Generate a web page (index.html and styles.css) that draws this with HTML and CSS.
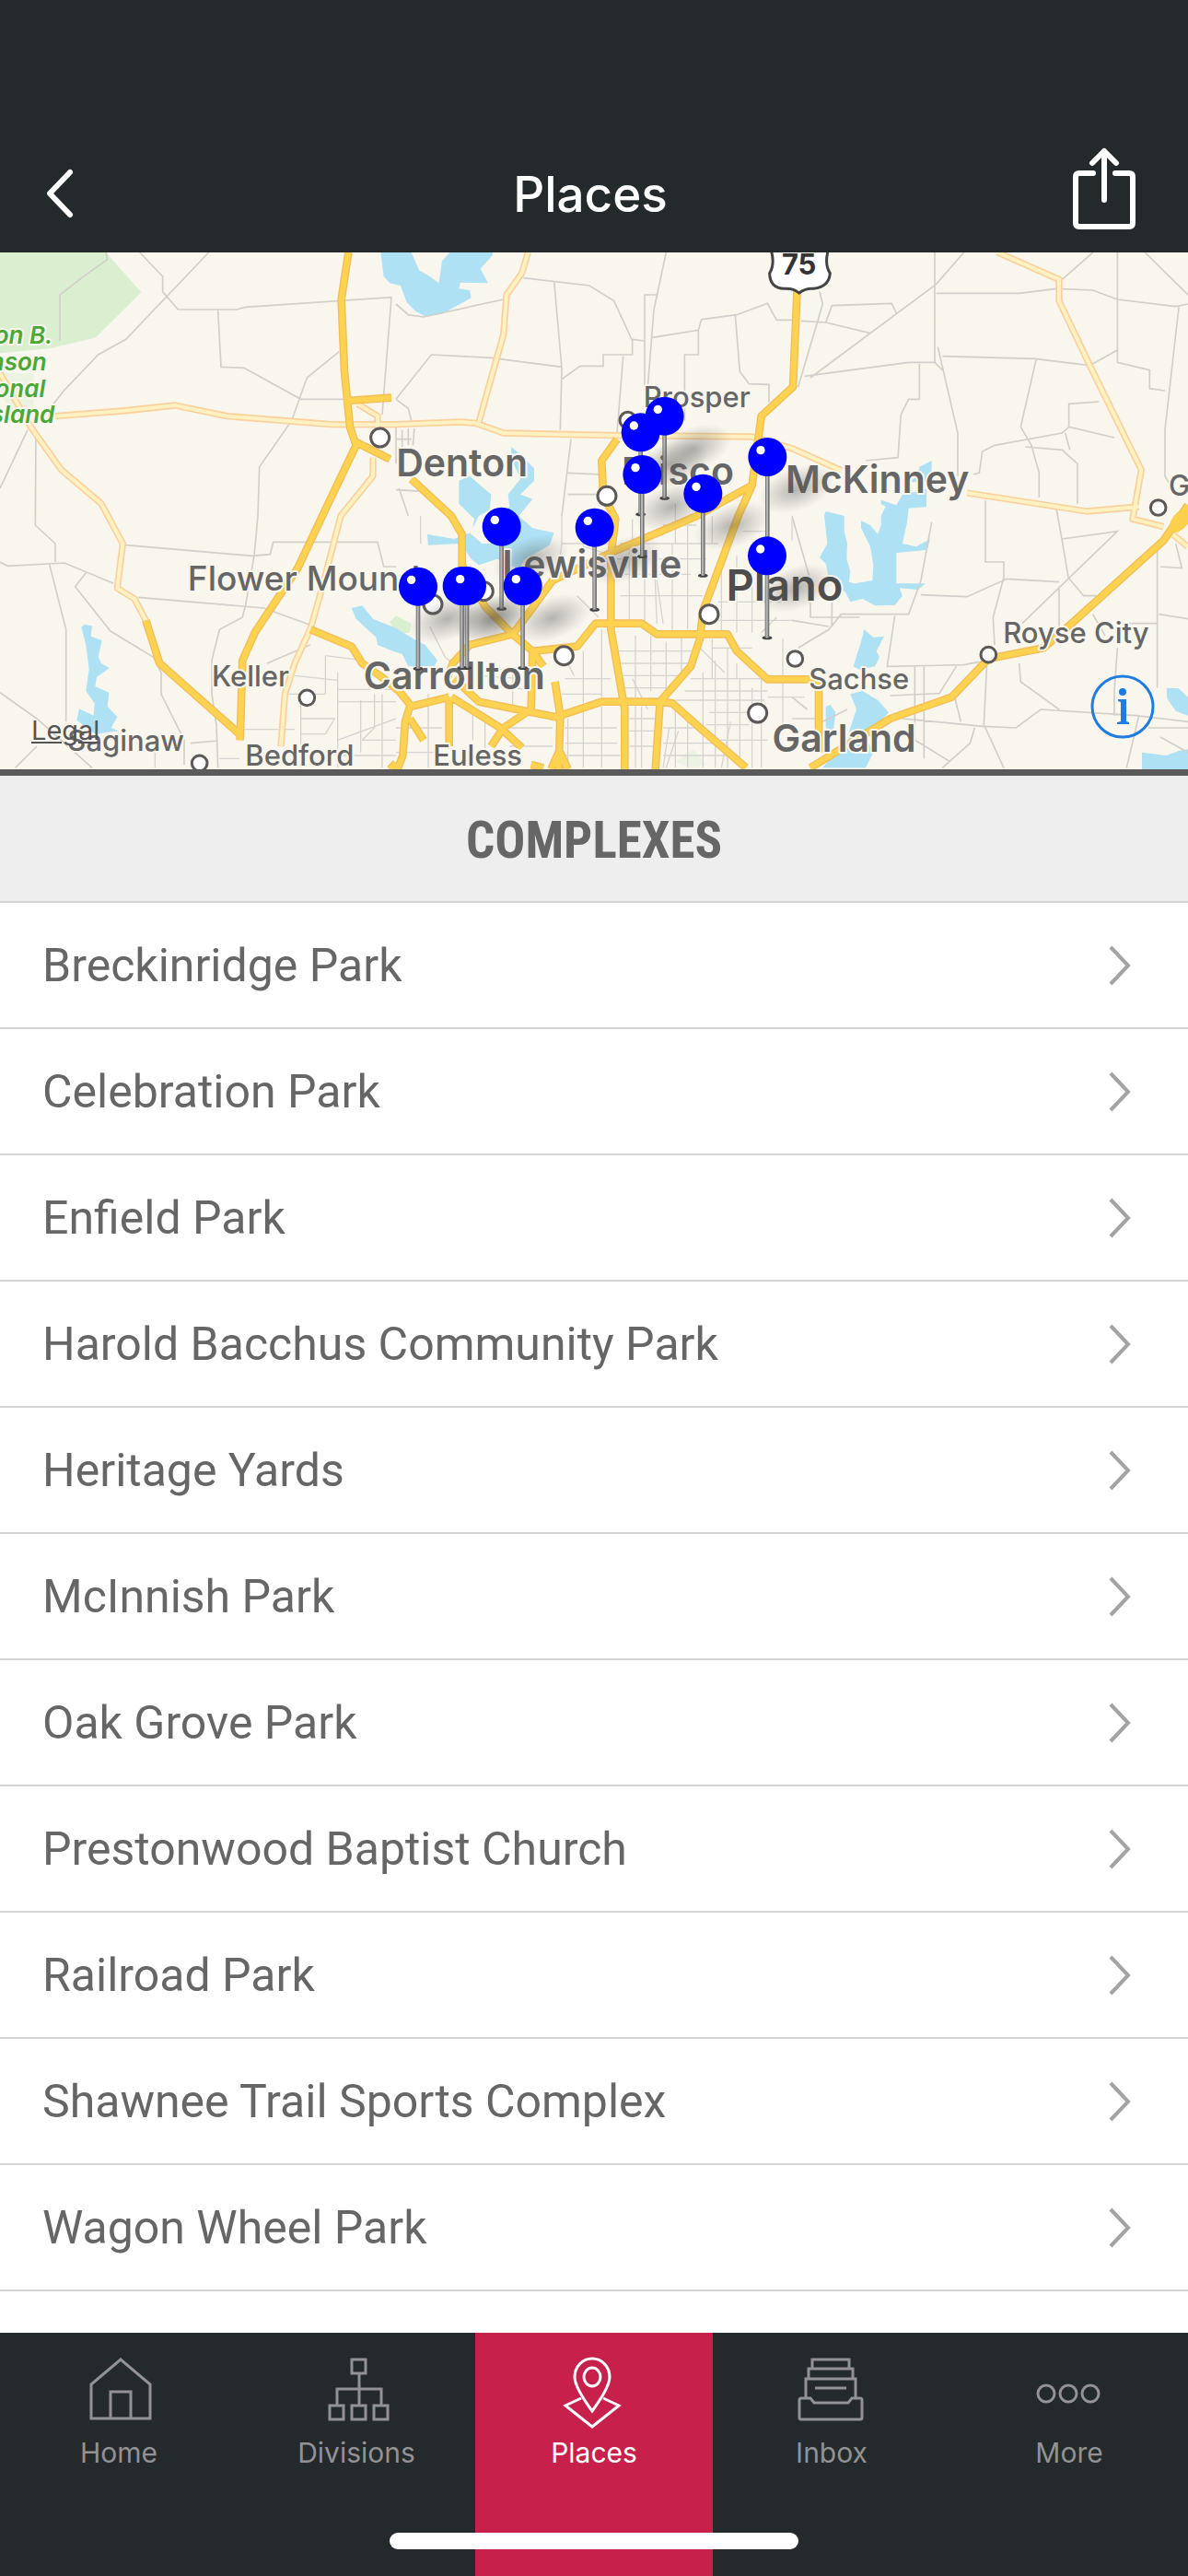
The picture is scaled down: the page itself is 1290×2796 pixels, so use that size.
FILE: index.html
```
<!DOCTYPE html>
<html lang="en">
  <head>
    <meta charset="UTF-8" />
    <meta name="viewport" content="width=device-width, initial-scale=1.0" />
    <title>Places</title>
    <link rel="stylesheet" href="styles.css">
  </head>
  <body>
    <header class="header">
      <button class="header-btn" aria-label="Back">
        <svg class="icon-back" viewBox="0 0 32 56"><path d="M27 4L5 27L27 50" /></svg>
      </button>
      <h1>Places</h1>
      <button class="header-btn header-btn-right" aria-label="Share">
        <svg class="icon-share" viewBox="0 0 68 102">
          <path d="M22 28H7Q3 28 3 32V82Q3 86 7 86H61Q65 86 65 82V32Q65 28 61 28H46" />
          <path d="M34 57V4M21 17L34 4L47 17" />
        </svg>
      </button>
    </header>

    <main>
      <!-- Map -->
      <div class="map">
        <svg class="map-canvas" viewBox="0 12 3870 1683" role="img" aria-label="Map of the complexes">
          <defs>
            <radialGradient id="shade">
              <stop offset="0" stop-color="#444" stop-opacity="0.38" />
              <stop offset="0.5" stop-color="#555" stop-opacity="0.2" />
              <stop offset="1" stop-color="#666" stop-opacity="0" />
            </radialGradient>
            <g id="pin">
              <ellipse cx="95" cy="105" rx="130" ry="70" transform="rotate(-20 95 105)" fill="url(#shade)" />
              <ellipse cx="0" cy="267" rx="16" ry="6" fill="#444" />
              <path d="M0 50V267" stroke="#777" stroke-width="14" />
              <path d="M-1 50V267" stroke="#b5b5b5" stroke-width="6" />
              <circle r="63" fill="#00f" />
              <circle cx="-22" cy="-22" r="14" fill="#fff" />
            </g>
            <g id="highways">
              <path d="M0 405L100 580L200 720L330 830L400 960L382 1105L438 1140L475 1210" />
              <path d="M180 545L400 528L570 510L740 545L1080 572L1290 572L1500 564L1550 568L1640 600L2010 608L2450 612L2580 650L2740 722M3150 795L3540 855L3710 840" />
              <path d="M1165 505L1230 545V600M1215 680V740L1110 870L1045 1120L1012 1235L960 1350L928 1450L915 1620" />
              <path d="M1720 12L1700 80L1650 150L1640 280L1560 565" />
              <path d="M3250 12L3450 100V170L3560 400L3718 720L3690 880L3790 905M3820 930L3870 970" />
            </g>
            <path id="freeways" d="M1135 12L1112 165L1122 400L1140 580L1160 640L1050 870L970 1040L830 1250L790 1340L782 1600M1130 495L1275 485M1160 630L1270 685M1340 750L1470 870L1505 930V1030L1580 1165L1670 1255L1740 1315M475 1210L520 1350L780 1580M1012 1240L1145 1295L1180 1350L1240 1392L1300 1440L1340 1490L1463 1460M1455 1400L1475 1350L1530 1290L1670 1255L1720 1190L1800 1080L1990 990L2270 870L2450 770M2597 130L2583 450L2480 545L2450 770L2405 870L2290 1180L2280 1270L2250 1360L2150 1475L2135 1695M2010 620L1960 690L1965 800L2005 880L1990 1000L1990 1240L2035 1500V1695M1740 1310L1880 1295L1940 1220H2090L2140 1255H2370L2400 1310L2500 1402H2667V1640M1335 1490L1320 1540L1312 1650L1295 1695M1335 1530L1380 1600M1463 1460V1620M1480 1400L1560 1475L1810 1525L1960 1475H2150L2190 1480L2280 1560L2430 1690M1470 1460L1630 1560L1700 1625M1600 1620L1640 1560L1730 1500L1735 1310L1770 1360M1808 1410L1825 1520L1820 1695M1820 1640L1795 1695M1825 1640L1850 1695M1730 1680L1770 1690M1290 1675L1270 1695M3870 835L3790 950L3480 1230L3400 1300L3220 1335L3100 1460L2900 1530L2640 1690" />
          </defs>

          <!-- parks -->
          <path class="park" d="M0 12H345L460 142L310 290L160 325L0 340Z" />
          <path class="park faint" d="M0 405H110V520L60 545L0 480Z" />
          <path class="park" d="M1270 1215L1290 1195L1340 1220L1335 1250L1290 1255Z" />
          <path class="park faint" d="M2200 1670L2260 1630L2300 1680L2250 1690Z" />

          <!-- lakes -->
          <g class="lake">
            <path d="M1240 12L1250 90L1270 112L1305 120L1325 175L1355 205L1385 220L1440 212L1535 160L1530 135L1495 130L1500 110L1590 112L1565 65L1605 20V12H1465L1440 40L1430 112L1400 90L1365 70L1340 12Z" />
            <path d="M1495 755L1530 740L1600 800L1595 850L1560 870L1540 910L1545 880L1495 830ZM1660 840L1655 800L1695 750L1665 680V645L1690 665L1740 715L1740 755L1695 800L1735 815L1690 870L1735 910L1805 925L1790 965L1710 1010L1690 1045L1620 1010L1560 1030L1535 1010L1500 960L1395 965L1392 930L1480 945L1530 925L1570 960L1600 960L1580 900Z" />
            <path d="M1145 1170L1180 1162L1215 1205L1290 1235L1355 1275L1385 1290L1425 1340L1415 1360L1330 1360L1310 1320L1280 1310L1230 1290L1225 1265L1160 1205Z" />
            <path d="M265 1232L275 1223L300 1228L296 1262L332 1275L320 1330L330 1350L356 1365L315 1395L310 1425L355 1445L350 1490L382 1525L362 1560L387 1570L310 1580L250 1535L258 1498L305 1520L308 1480L280 1440L290 1370L280 1290Z" />
            <path d="M2685 870L2690 855L2750 870L2750 920L2760 960L2758 1010L2770 1050L2765 1085L2785 1090L2842 1080L2845 1030L2835 970L2805 910L2805 885L2835 900L2860 930L2870 900L2870 870L2885 840L2870 830L2870 818L2920 835L2940 800L3010 785L3035 770V690L2995 710L2990 740L2960 760H3018V840L2960 845L2955 890L2940 960L2985 970L3030 945L3020 980L2980 985L2920 990L2920 1090L3015 1090L2990 1110L2930 1105L2940 1130L2915 1160L2850 1162L2810 1140L2770 1150L2755 1120L2700 1070L2690 1025L2670 1005L2695 960Z" />
            <path d="M2815 1240L2845 1265L2880 1262L2855 1310L2865 1330L2850 1360L2800 1370L2780 1360L2795 1310L2805 1280Z" />
            <path d="M2770 1450L2810 1440L2860 1470L2895 1510L2850 1560L2820 1590L2845 1640L2820 1690H2680L2700 1665L2760 1620L2770 1560L2790 1500ZM2690 1490L2705 1485L2722 1510L2715 1570L2690 1560Z" />
            <path d="M3800 1430L3840 1432L3870 1460V1520L3830 1505L3802 1465ZM3720 1640L3800 1650L3840 1635L3870 1630V1695H3720Z" />
          </g>

          <!-- local roads -->
          <g class="local">
            <path d="M345 12L350 35L270 92L195 150V300M455 12L530 90V140L580 198H770L800 190L1275 158L1245 540M680 12L410 295L320 345L210 460L170 510M710 200L720 385L795 388L980 490H1120M1105 335L1000 420L975 490L950 560L845 710L840 870L828 1000L800 1160L790 1200L715 1240L690 1340V1450L705 1550L710 1690" />
            <path d="M90 590L0 780M117 600L115 900L180 960V1020M0 1020L25 1033L210 1023L370 1090M160 1023L215 1240V1540M280 1055L245 1100L360 1245L500 1330L525 1380L525 1450L600 1600M410 965L820 1000L880 995L890 955L1230 955L1250 1035H1290M450 1135L860 1170L1010 1225M0 1445L120 1530L300 1690M120 1620L50 1690M620 1610L710 1602M870 1350L1010 1290M600 1600V1680" />
            <path d="M1290 180L1330 215L1380 222L1640 165M1705 95L1920 120L2000 170L2060 300L2060 345H1965V382H1890L1830 425M1805 105L1830 390L1825 590M1290 490L1405 345L1600 355L1830 385M2170 12L2130 200L2110 450M2140 150H2100V450M2060 295L2100 300M2120 290L2275 265L2285 230L2400 215L2500 178L2530 232H2590M2275 265V345H2230V560M2395 215L2410 400L2440 440L2505 442V500M2030 350L2010 600M1860 620L1830 870M1850 730L1960 735M1850 800H1960M1290 490L1330 520L1340 560" />
            <path d="M1290 580V700M1310 590V650M1330 585V640M1350 585L1345 640M1290 620H1340M1300 780L1330 870M1290 785L1380 790" />
            <path d="M2610 235L2690 240L2835 275M3140 12L3050 115L2640 420M2670 140L2680 180L2600 450M2690 240L2710 185L2905 178L2920 210M3045 12V370L3070 395M3050 145H3320L3440 130L3560 135L3640 165L3830 188L3870 180M2620 415L2960 370H3045M2995 375V490H2960L2935 540L2925 680L2820 690M3055 320L3120 600V740M3070 350L3370 358L3550 380L3640 330L3640 370L3745 395V455L3795 462M3640 12V370M3560 12L3460 100M3730 12L3870 150M3840 190L3795 590V740L3830 800M3375 362L3325 580L3360 640L3385 730V810M3580 498L3482 505V580L3630 615M3482 580L3460 600L3240 640L3200 660L3190 730L3170 735M3340 645L3460 655L3510 700V830M3470 600L3485 655M3210 820V1020H3270V1070L3235 1200L3240 1290" />
            <path d="M3440 840L3460 950L3480 1070L3530 1130H3570M3460 945L3640 920L3330 1220M3450 1100V1230M3035 890L3000 1080L2960 1190L2740 1190L2700 1240L2600 1300M3000 1127L3150 1133L3280 1075L3450 1085M2915 1195L2890 1360L3140 1355L3190 1345M2900 1455L3060 1448L3115 1360M2980 1360V1600L3095 1670M3010 1360V1660M2940 1530L3200 1555L3310 1560L3390 1500L3700 1520L3870 1540M3215 1350L3205 1550L3270 1690M3320 1350L3325 1410L3450 1500M3110 1460L3130 1540M3175 1560L3160 1610L3070 1690M3640 1300L3630 1440V1520M3770 950V1430M3775 1190L3870 1205M3650 1220H3770M3560 1190L3600 1260M3780 1590L3870 1640M3710 1520L3670 1690M3740 1560H3870M2580 870L2640 1080M2640 1130V1200H2800M2580 1210L2700 1230" />
            <path d="M2710 1230V1130M2580 1460L2630 1500M2580 1530H2660M2680 1540L2760 1500M3830 960L3850 1040L3780 1035" />
          </g>

          <!-- city street grid -->
          <g class="grid">
            <path d="M1060 1325L1180 1340M1060 1325V1450M1100 1380V1690M940 1450H1060M960 1390L1100 1405M1100 1435H1290M1100 1475H1290M980 1530L1090 1530L1060 1580H980V1690M1175 1470V1640M1245 1450V1690M1220 1450V1560L1180 1600M1100 1600L1290 1530M1180 1600H1290M1100 1650H1290M790 1565H960M715 1660H780M505 1640V1690M980 1480V1580" />
            <path d="M1395 1450V1690M1400 1230L1450 1330L1520 1390M1370 870V960M1670 1370V1500M1830 870V960L1820 1040M1900 880V970L2000 1000M1830 960H1980M2010 1060H2250M2020 1130H2290M2010 1010H2300M2020 960H2340M2050 980V1220M2100 1010V1220M2130 980L2140 1220M2190 960V1240M2240 900V1240M2070 1260V1690M2120 1260V1440M2170 1280V1440M2220 1260V1400M1960 1240V1460M1900 1310V1480M2000 1310H2260M2020 1350H2250M2030 1390H2220M2030 1430H2170M1840 1400H1990M1830 1450H1960" />
            <path d="M1850 1530V1690M1900 1510V1690M1960 1490V1690M2090 1490V1690M1840 1560H2010M1840 1610H2010M1840 1650H2020M2050 1530H2140M2050 1570H2140M2050 1620H2130M2160 1560H2270M2160 1610H2330M2160 1650H2370M2200 1490V1690M2240 1530V1690M2290 1380V1690M2330 1340V1690M2370 1300V1690M2410 1400V1690M2450 1430V1690M2250 1400H2480M2230 1440H2500M2200 1470H2490M2310 1510H2440M2300 1550H2440M2340 1600H2500M2400 1350V1400M2320 1270V1400M2350 1040V1250M2400 1000V1250M2450 1060V1250M2340 1150H2550M2340 1210H2580M2320 1300H2450M2480 1400V1690M2550 1270V1560M2500 1460H2620M2530 1200L2480 1250M1680 1430L1735 1440M1560 1390L1700 1400M1650 1560H1800M1660 1620H1800M1290 1640H1440M1290 1560H1440M1540 1500V1600M1580 1530V1640M2160 900H2270M2200 830V960M2060 880V960M2320 870V960M2580 880V950M2420 920H2500" />
            <path d="M1840 1330L1870 1390M2280 1300L2360 1380M2140 1080L2160 1220M2060 1400L2110 1500M2180 1560L2160 1690M2380 1540L2350 1690M1880 1130L1950 1200M2210 1570L2170 1690" />
          </g>

          <!-- highways -->
          <use href="#highways" class="highway" />
          <use href="#highways" class="highway highway-fill" />

          <!-- freeways -->
          <use href="#freeways" class="freeway-edge" />
          <use href="#freeways" class="freeway" />
          <ellipse cx="3845" cy="885" rx="26" ry="45" transform="rotate(38 3845 885)" fill="#fbd04c" />

          <!-- route shield -->
          <path d="M2512 5Q2525 50 2507 80Q2508 128 2555 130Q2585 128 2603 144Q2625 128 2650 130Q2700 125 2704 80Q2685 50 2698 5Z" fill="#fff" stroke="#444" stroke-width="9" />
          <text class="label shield" x="2603" y="84">75</text>

          <!-- towns -->
          <g class="town">
            <circle cx="1238" cy="615" r="30" />
            <circle cx="2045" cy="558" r="26" />
            <circle cx="1977" cy="805" r="30" />
            <circle cx="1410" cy="1158" r="30" />
            <circle cx="1576" cy="1115" r="30" />
            <circle cx="1837" cy="1325" r="30" />
            <circle cx="2310" cy="1190" r="30" />
            <circle cx="2590" cy="1335" r="25" />
            <circle cx="2468" cy="1512" r="30" />
            <circle cx="1000" cy="1462" r="25" />
            <circle cx="650" cy="1675" r="25" />
            <circle cx="3220" cy="1322" r="25" />
            <circle cx="3773" cy="843" r="25" />
          </g>

          <!-- labels -->
          <g class="label label-park">
            <text x="172" y="308">Lyndon B.</text>
            <text x="152" y="395">Johnson</text>
            <text x="148" y="482">National</text>
            <text x="178" y="568">Grassland</text>
          </g>
          <g class="label label-small">
            <text x="2270" y="516">Prosper</text>
            <text x="816" y="1424">Keller</text>
            <text x="410" y="1635">Saginaw</text>
            <text x="976" y="1684">Bedford</text>
            <text x="1556" y="1684">Euless</text>
            <text x="3505" y="1284">Royse City</text>
            <text x="2798" y="1434">Sachse</text>
            <text x="3842" y="804">G</text>
          </g>
          <g class="label label-mid">
            <text x="990" y="1113">Flower Mound</text>
          </g>
          <g class="label label-large">
            <text x="1505" y="742">Denton</text>
            <text x="2858" y="794">McKinney</text>
            <text x="2208" y="767">Frisco</text>
            <text x="1928" y="1072">Lewisville</text>
            <text x="1480" y="1435">Carrollton</text>
            <text x="2750" y="1639">Garland</text>
          </g>
          <g class="label label-city">
            <text x="2556" y="1147">Plano</text>
          </g>

          <!-- pins -->
          <use href="#pin" x="2165" y="545" />
          <use href="#pin" x="2087" y="598" />
          <use href="#pin" x="2500" y="678" />
          <use href="#pin" x="2092" y="735" />
          <use href="#pin" x="2290" y="797" />
          <use href="#pin" x="1634" y="905" />
          <use href="#pin" x="1937" y="908" />
          <use href="#pin" x="2499" y="1000" />
          <use href="#pin" x="1362" y="1100" />
          <use href="#pin" x="1521" y="1098" />
          <use href="#pin" x="1505" y="1098" />
          <circle cx="1512" cy="1098" r="63" fill="#00f" />
          <circle cx="1499" cy="1076" r="14" fill="#fff" />
          <use href="#pin" x="1703" y="1098" />
        </svg>
        <a class="map-legal" href="#">Legal</a>
        <button class="map-info" aria-label="Info">
          <svg viewBox="0 0 70 70">
            <circle cx="35" cy="35" r="33" />
            <path class="glyph" d="M35 15A4 4 0 0 1 35 23A4 4 0 0 1 35 15ZM30 27H39V51L42 52V54H29V52L33 51V30L30 29Z" />
          </svg>
        </button>
      </div>

      <h2>Complexes</h2>

      <ul class="places">
        <li><a href="#">Breckinridge Park <svg class="chevron" viewBox="0 0 24 44"><path d="M2 2L21 22L2 42" /></svg></a></li>
        <li><a href="#">Celebration Park <svg class="chevron" viewBox="0 0 24 44"><path d="M2 2L21 22L2 42" /></svg></a></li>
        <li><a href="#">Enfield Park <svg class="chevron" viewBox="0 0 24 44"><path d="M2 2L21 22L2 42" /></svg></a></li>
        <li><a href="#">Harold Bacchus Community Park <svg class="chevron" viewBox="0 0 24 44"><path d="M2 2L21 22L2 42" /></svg></a></li>
        <li><a href="#">Heritage Yards <svg class="chevron" viewBox="0 0 24 44"><path d="M2 2L21 22L2 42" /></svg></a></li>
        <li><a href="#">McInnish Park <svg class="chevron" viewBox="0 0 24 44"><path d="M2 2L21 22L2 42" /></svg></a></li>
        <li><a href="#">Oak Grove Park <svg class="chevron" viewBox="0 0 24 44"><path d="M2 2L21 22L2 42" /></svg></a></li>
        <li><a href="#">Prestonwood Baptist Church <svg class="chevron" viewBox="0 0 24 44"><path d="M2 2L21 22L2 42" /></svg></a></li>
        <li><a href="#">Railroad Park <svg class="chevron" viewBox="0 0 24 44"><path d="M2 2L21 22L2 42" /></svg></a></li>
        <li><a href="#">Shawnee Trail Sports Complex <svg class="chevron" viewBox="0 0 24 44"><path d="M2 2L21 22L2 42" /></svg></a></li>
        <li><a href="#">Wagon Wheel Park <svg class="chevron" viewBox="0 0 24 44"><path d="M2 2L21 22L2 42" /></svg></a></li>
      </ul>
    </main>

    <nav class="tabs">
      <a class="tab" href="#">
        <svg viewBox="0 0 80 80"><path d="M10 67V30L42 3L74 30V67ZM31 67V38H53V67" /></svg>
        Home
      </a>
      <a class="tab" href="#">
        <svg viewBox="0 0 80 80"><path d="M35 3H50V18H35ZM43 18V53M19 53V35H67V53M11 53H26V68H11ZM35 53H50V68H35ZM59 53H74V68H59Z" /></svg>
        Divisions
      </a>
      <a class="tab active" href="#">
        <svg viewBox="0 0 80 80"><path d="M38 59Q19 33 19 22A19 20 0 0 1 57 22Q57 33 38 59ZM38 12A9 10 0 0 1 38 32A9 10 0 0 1 38 12ZM26 45L9 53L38 76L67 53L50 45" /></svg>
        Places
      </a>
      <a class="tab" href="#">
        <svg viewBox="0 0 80 80"><path d="M19 13V3H59V13M15 24V13H63V24M12 45V24H66V45M22 34H56M7 45H17L21 50H58L62 45H71Q73 45 73 47V66Q73 68 71 68H7Q5 68 5 66V47Q5 45 7 45Z" /></svg>
        Inbox
      </a>
      <a class="tab" href="#">
        <svg viewBox="0 0 80 80"><circle cx="15" cy="40" r="9" /><circle cx="39" cy="40" r="9" /><circle cx="63" cy="40" r="9" /></svg>
        More
      </a>
      <div class="home-bar"></div>
    </nav>
  </body>
</html>
```
FILE: styles.css
```
* {
  box-sizing: border-box;
}

body {
  margin: 0;
  min-height: 100vh;
  display: flex;
  flex-direction: column;
  background: #fff;
  color: #666;
  font-family: Roboto, "Liberation Sans", sans-serif;
}

button {
  padding: 0;
  border: none;
  background: none;
  cursor: pointer;
}

svg {
  display: block;
}

/* Header */
.header {
  display: grid;
  grid-template-columns: 1fr auto 1fr;
  align-items: center;
  height: 274px;
  padding: 148px 57px 0 49px;
  background: #24292c;
  color: #fff;
}

.header h1 {
  margin: 0;
  font-family: Inter, sans-serif;
  font-size: 53px;
  font-weight: 500;
  line-height: 64px;
}

.header-btn {
  justify-self: start;
}

.header-btn-right {
  justify-self: end;
}

.header svg {
  fill: none;
  stroke: #fff;
  stroke-width: 6;
  stroke-linecap: round;
  stroke-linejoin: round;
}

.icon-back {
  width: 32px;
  height: 56px;
}

.icon-share {
  width: 68px;
  height: 102px;
}

/* Map */
.map {
  position: relative;
  border-bottom: 7px solid #5a5a5a;
  background: #f9f6ee;
}

.map-canvas {
  width: 100%;
  height: auto;
}

.park {
  fill: #d9efd0;
}

.faint {
  opacity: 0.4;
}

.lake {
  fill: #aee1f4;
}

.local,
.grid {
  fill: none;
  stroke: #d2cfca;
  stroke-width: 5;
}

.grid {
  stroke: #d6d4d0;
  stroke-width: 4;
}

.highway {
  fill: none;
  stroke: #fbd09a;
  stroke-width: 22;
  stroke-linejoin: round;
}

.highway-fill {
  stroke: #fff1c2;
  stroke-width: 12;
}

.freeway-edge,
.freeway {
  fill: none;
  stroke: #f3bd55;
  stroke-width: 26;
  stroke-linejoin: round;
}

.freeway {
  stroke: #fdd250;
  stroke-width: 18;
}

.town {
  fill: #fff;
  stroke: #5c5858;
  stroke-width: 9;
}

.label {
  font-family: Inter, sans-serif;
  text-anchor: middle;
  fill: #666;
  stroke: #f9f6ee;
  stroke-width: 12;
  stroke-linejoin: round;
  paint-order: stroke;
}

.label-park {
  font-size: 78px;
  font-style: italic;
  font-weight: 600;
  text-anchor: end;
  fill: #4ba836;
}

.label-small {
  font-size: 93px;
  font-weight: 500;
}

.label-mid {
  font-size: 111px;
  font-weight: 500;
}

.label-large {
  font-size: 123px;
  font-weight: 600;
}

.label-city {
  font-size: 141px;
  font-weight: 600;
  fill: #4d4d4d;
}

.shield {
  font-size: 93px;
  font-weight: 700;
  fill: #333;
  stroke: none;
}

.map-legal {
  position: absolute;
  left: 34px;
  bottom: 24px;
  color: #555;
  font-family: Inter, sans-serif;
  font-size: 29px;
  line-height: 36px;
}

.map-info {
  position: absolute;
  right: 36px;
  bottom: 33px;
}

.map-info svg {
  width: 70px;
  height: 70px;
  fill: none;
  stroke: #1f7ce0;
  stroke-width: 3;
}

.map-info .glyph {
  fill: #1f7ce0;
  stroke: none;
}

/* List of complexes */
h2 {
  margin: 0;
  padding: 32px 0 28px;
  border-bottom: 2px solid #d4d4d4;
  background: #eee;
  font-family: "Roboto Condensed", "Liberation Sans Narrow", Roboto, sans-serif;
  font-size: 55px;
  font-weight: 700;
  line-height: 76px;
  text-align: center;
  text-transform: uppercase;
}

.places {
  margin: 0;
  padding: 0;
  list-style: none;
}

.places a {
  display: flex;
  align-items: center;
  justify-content: space-between;
  height: 137px;
  padding: 0 62px 0 46px;
  border-bottom: 2px solid #d4d4d4;
  color: inherit;
  font-size: 50px;
  text-decoration: none;
}

.chevron {
  width: 24px;
  height: 44px;
  fill: none;
  stroke: #a3a3a3;
  stroke-width: 4;
}

/* Tab bar */
.tabs {
  position: relative;
  display: flex;
  height: 264px;
  margin-top: auto;
  background: #24292c;
}

.tab {
  flex: 1;
  display: flex;
  flex-direction: column;
  align-items: center;
  gap: 5px;
  padding-top: 26px;
  color: #929294;
  font-family: Inter, sans-serif;
  font-size: 30px;
  line-height: 38px;
  text-decoration: none;
}

.tab svg {
  width: 80px;
  height: 80px;
  fill: none;
  stroke: currentColor;
  stroke-width: 3;
}

.tab.active {
  background: #c7214b;
  color: #fff;
}

.home-bar {
  position: absolute;
  left: 50%;
  bottom: 29px;
  width: 444px;
  height: 18px;
  margin-left: -222px;
  border-radius: 9px;
  background: #fff;
}
```
